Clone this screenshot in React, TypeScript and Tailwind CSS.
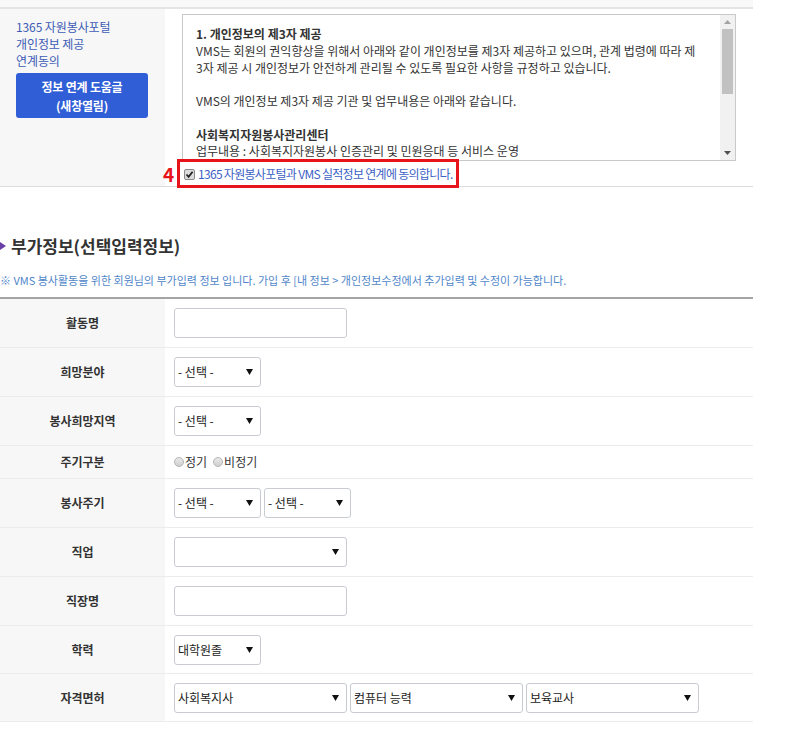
import React from "react";

const FONT = "'Noto Sans CJK KR', 'Noto Sans', sans-serif";

function Arrow() {
  return (
    <svg width="7" height="6" viewBox="0 0 7 6" className="shrink-0">
      <path d="M0 0 H7 L3.5 6 Z" fill="#111" />
    </svg>
  );
}

function Select({ w, text }: { w: string; text?: string }) {
  return (
    <div
      className={`${w} h-[30px] border border-[#c8ccd2] rounded-[3px] bg-white flex items-center justify-between pl-[3px] pr-[7px] text-[12px] text-[#222]`}
    >
      <span>{text ?? ""}</span>
      <Arrow />
    </div>
  );
}

function Input() {
  return <div className="w-[173px] h-[30px] border border-[#c8ccd2] rounded-[3px] bg-white" />;
}

function Radio({ label }: { label: string }) {
  return (
    <span className="inline-flex items-center">
      <span className="w-[10px] h-[10px] rounded-full border border-[#b5b5b5] bg-gradient-to-b from-[#eaeaea] to-[#cfcfcf] mr-[1px]" />
      <span>{label}</span>
    </span>
  );
}

function Row({ label, h, children }: { label: string; h: string; children: React.ReactNode }) {
  return (
    <div className={`flex ${h} border-b border-[#ececec]`}>
      <div className="w-[165px] bg-[#f7f7f7] flex items-center justify-center text-[12px] font-bold text-[#333]">
        {label}
      </div>
      <div className="flex-1 flex items-center pl-[9px] gap-[3px]">{children}</div>
    </div>
  );
}

export default function App() {
  return (
    <div className="w-[787px] h-[734px] bg-white overflow-hidden" style={{ fontFamily: FONT }}>
      <div className="w-[753px]">
        {/* top line */}
        <div className="h-[7px] bg-[#f9f9f9]" />
        <div className="h-[2px] bg-[#e4e4e4]" />

        {/* consent section */}
        <div className="flex border-b border-[#dcdcdc] h-[178px]">
          <div className="w-[165px] bg-[#f7f7f7] pl-[16px] pt-[9px]">
            <div className="text-[12px] leading-[17px] text-[#3d5bb5] tracking-[-0.1px]">
              1365 자원봉사포털
              <br />
              개인정보 제공
              <br />
              연계동의
            </div>
            <div className="mt-[4px] w-[132px] h-[45px] rounded-[3px] bg-[#2f5ed6] flex flex-col items-center justify-center text-white text-[12px] font-bold leading-[19px] tracking-[-0.2px]">
              <span>정보 연계 도움글</span>
              <span>(새창열림)</span>
            </div>
          </div>
          <div className="flex-1 pl-[17px] pt-[5px]">
            <div className="w-[554px] h-[147px] border border-[#c9c9c9] flex">
              <div className="flex-1 overflow-hidden pl-[13px] pt-[11px] text-[12px] leading-[16.75px] text-[#333] tracking-normal">
                <div className="font-bold">1. 개인정보의 제3자 제공</div>
                <div>
                  VMS는 회원의 권익향상을 위해서 아래와 같이 개인정보를 제3자 제공하고 있으며, 관계 법령에 따라 제
                  <br />
                  3자 제공 시 개인정보가 안전하게 관리될 수 있도록 필요한 사항을 규정하고 있습니다.
                </div>
                <div className="h-[16.75px]" />
                <div>VMS의 개인정보 제3자 제공 기관 및 업무내용은 아래와 같습니다.</div>
                <div className="h-[16.75px]" />
                <div className="font-bold">사회복지자원봉사관리센터</div>
                <div>업무내용 : 사회복지자원봉사 인증관리 및 민원응대 등 서비스 운영</div>
              </div>
              <div className="w-[15px] bg-[#f1f1f1] flex flex-col items-center">
                <div className="h-[14px] flex items-center justify-center">
                  <svg width="7" height="4" viewBox="0 0 7 4">
                    <path d="M0 4 L3.5 0 L7 4 Z" fill="#a3a3a3" />
                  </svg>
                </div>
                <div className="w-[11px] h-[65px] bg-[#c1c1c1]" />
                <div className="flex-1" />
                <div className="h-[14px] flex items-center justify-center">
                  <svg width="7" height="4" viewBox="0 0 7 4">
                    <path d="M0 0 H7 L3.5 4 Z" fill="#505050" />
                  </svg>
                </div>
              </div>
            </div>
            <div className="relative h-[26px] flex items-center pl-[1px]">
              <span className="absolute left-[-19px] top-[1px] text-[19px] font-bold text-[#e8141c] leading-[24px]">4</span>
              <div className="absolute left-[-5px] top-[-2px] w-[282px] h-[29px] border-[3px] border-[#e8141c]" />
              <span className="w-[11px] h-[11px] rounded-[2px] border border-[#8a8a8a] bg-[#dcdcdc] flex items-center justify-center ml-[1px]">
                <svg width="9" height="9" viewBox="0 0 9 9">
                  <path d="M1.5 4.5 L3.6 6.8 L7.6 1.8" stroke="#222" strokeWidth="1.8" fill="none" />
                </svg>
              </span>
              <span className="ml-[3px] text-[12px] text-[#3d5fc6] tracking-[-0.7px]">
                1365 자원봉사포털과 VMS 실적정보 연계에 동의합니다.
              </span>
            </div>
          </div>
        </div>

        {/* heading */}
        <div className="mt-[47px] flex items-center h-[24px]">
          <svg width="6" height="8" viewBox="0 0 6 8" className="mr-[5px]">
            <path d="M0 0 L6 4 L0 8 Z" fill="#6a3fa6" />
          </svg>
          <span className="text-[17px] font-bold text-[#333] tracking-normal">부가정보(선택입력정보)</span>
        </div>
        <div className="mt-[14px] text-[11px] text-[#4f86c9] tracking-normal leading-[16px]">
          ※ VMS 봉사활동을 위한 회원님의 부가입력 정보 입니다. 가입 후 [내 정보 &gt; 개인정보수정에서 추가입력 및 수정이 가능합니다.
        </div>

        {/* table */}
        <div className="mt-[9px] border-t-2 border-[#a4a4a4]">
          <Row label="활동명" h="h-[49px]">
            <Input />
          </Row>
          <Row label="희망분야" h="h-[49px]">
            <Select w="w-[87px]" text="- 선택 -" />
          </Row>
          <Row label="봉사희망지역" h="h-[49px]">
            <Select w="w-[87px]" text="- 선택 -" />
          </Row>
          <Row label="주기구분" h="h-[33px]">
            <div className="flex items-center gap-[6px] text-[12px] text-[#333]">
              <Radio label="정기" />
              <Radio label="비정기" />
            </div>
          </Row>
          <Row label="봉사주기" h="h-[49px]">
            <Select w="w-[87px]" text="- 선택 -" />
            <Select w="w-[87px]" text="- 선택 -" />
          </Row>
          <Row label="직업" h="h-[49px]">
            <Select w="w-[173px]" />
          </Row>
          <Row label="직장명" h="h-[49px]">
            <Input />
          </Row>
          <Row label="학력" h="h-[48px]">
            <Select w="w-[87px]" text="대학원졸" />
          </Row>
          <Row label="자격면허" h="h-[48px]">
            <Select w="w-[173px]" text="사회복지사" />
            <Select w="w-[173px]" text="컴퓨터 능력" />
            <Select w="w-[173px]" text="보육교사" />
          </Row>
        </div>
      </div>
    </div>
  );
}
